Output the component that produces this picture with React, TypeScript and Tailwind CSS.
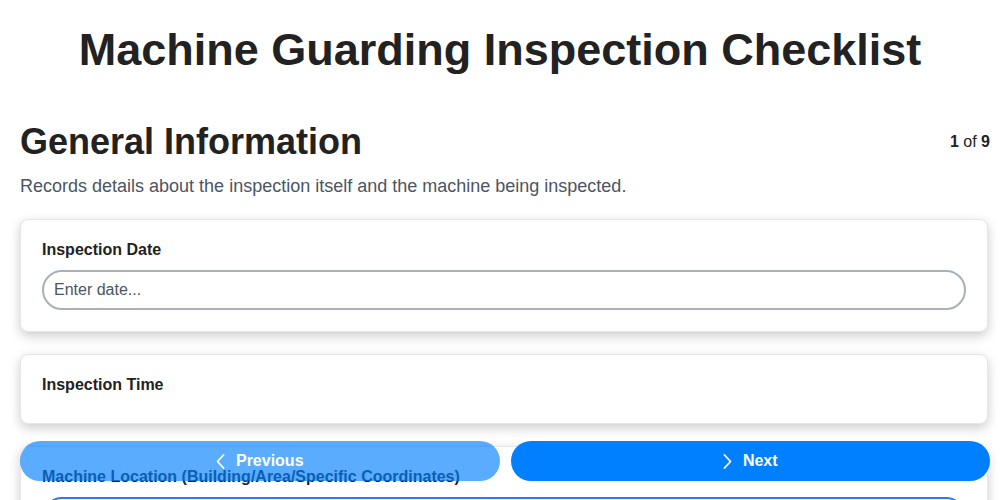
import React from "react";

function Chevron({ dir }: { dir: "left" | "right" }) {
  return (
    <svg width="9" height="15" viewBox="0 0 9 15" fill="none" stroke="currentColor" strokeWidth="1.8" strokeLinecap="round" strokeLinejoin="round">
      {dir === "left" ? <path d="M7.5 1 L1.5 7.5 L7.5 14" /> : <path d="M1.5 1 L7.5 7.5 L1.5 14" />}
    </svg>
  );
}

function Card({ label, children, pb = "pb-[21px]" }: { label: string; children?: React.ReactNode; pb?: string }) {
  return (
    <div className={`rounded-lg border border-[#e6e6ea] bg-white px-[21px] pt-5 shadow-[0_4px_12px_rgba(0,0,0,0.2)] ${pb}`}>
      <div className="mb-[10px] text-[16px] font-bold leading-5 text-[#222]">{label}</div>
      {children}
    </div>
  );
}

export default function App() {
  return (
    <div className="min-h-screen bg-white font-['Liberation_Sans',Arial,sans-serif] text-[#222]">
      <h1 className="pt-[22px] text-center text-[45px] font-bold leading-[56px] text-[#222]">
        Machine Guarding Inspection Checklist
      </h1>
      <div className="pl-5 pr-[10px] pb-[120px]">
        <div className="mt-[42px] flex items-center justify-between">
          <h2 className="text-[36px] font-bold leading-[44px] text-[#222]">General Information</h2>
          <div className="text-[16px] text-[#222]">
            <span className="font-bold">1</span> of <span className="font-bold">9</span>
          </div>
        </div>
        <p className="mt-[10px] text-[18px] leading-6 text-[#4b5563]">
          Records details about the inspection itself and the machine being inspected.
        </p>
        <div className="mt-[21px] mr-[2px] flex flex-col gap-[22px]">
          <Card label="Inspection Date">
            <input
              className="h-10 w-full rounded-full border-2 border-[#a8b0b8] px-[10px] text-[16px] text-[#222] placeholder-[#4b5563] outline-none"
              placeholder="Enter date..."
            />
          </Card>
          <Card label="Inspection Time" pb="pb-[18px]" />
          <Card label="Machine Location (Building/Area/Specific Coordinates)">
            <input
              className="h-10 w-full rounded-full border-2 border-[#2b7de9] px-[10px] text-[16px] text-[#222] placeholder-[#4b5563] outline-none"
              placeholder="Enter location..."
            />
          </Card>
        </div>
      </div>
      <div className="fixed bottom-[19px] left-5 right-[10px] grid grid-cols-2 gap-[11px]">
        <button className="flex h-10 items-center justify-center gap-[11px] rounded-[20px] bg-[#0080ff] text-[16px] font-bold text-white opacity-65">
          <Chevron dir="left" />
          Previous
        </button>
        <button className="flex h-10 items-center justify-center gap-[11px] rounded-[20px] bg-[#0080ff] text-[16px] font-bold text-white">
          <Chevron dir="right" />
          Next
        </button>
      </div>
    </div>
  );
}
